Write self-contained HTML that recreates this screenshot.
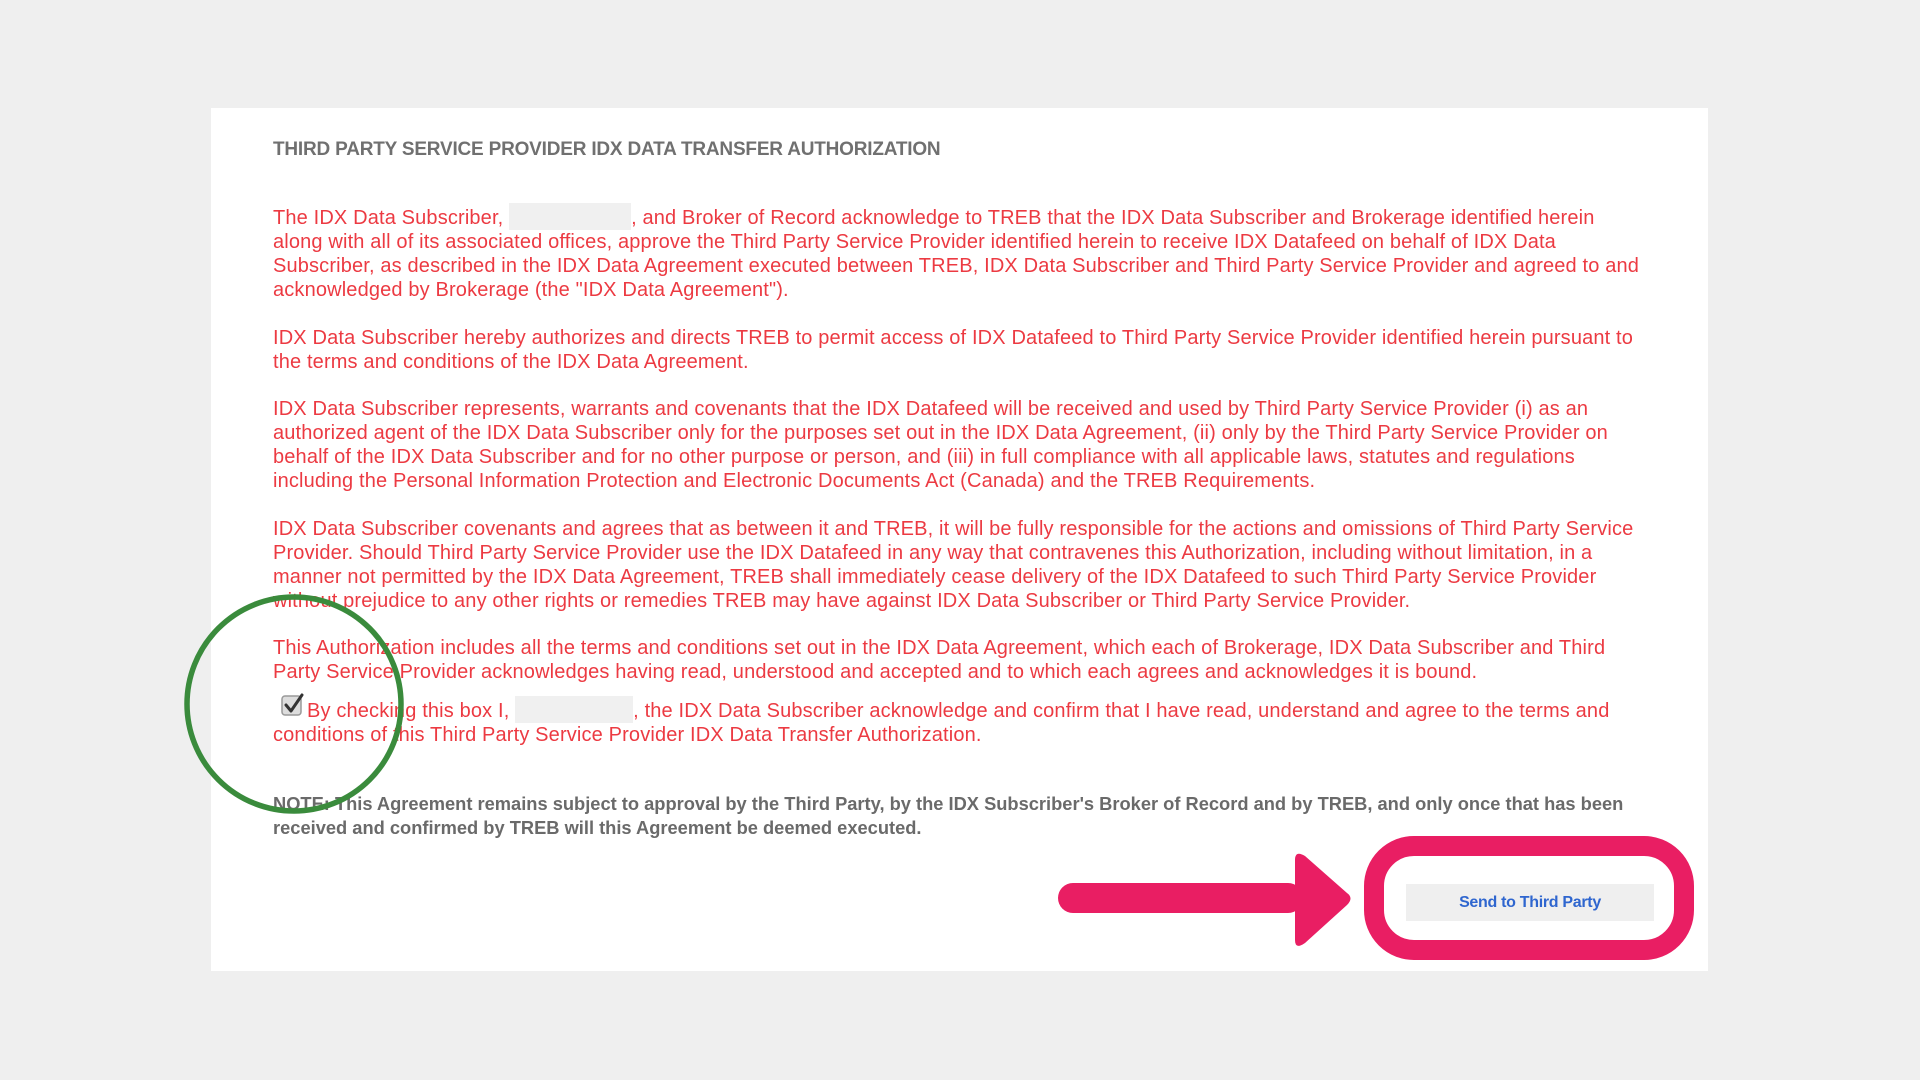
<!DOCTYPE html>
<html><head><meta charset="utf-8"><style>
html,body{margin:0;padding:0}
body{width:1920px;height:1080px;background:#efefef;position:relative;overflow:hidden;font-family:"Liberation Sans",Arial,sans-serif}
.card{position:absolute;left:211px;top:108px;width:1497px;height:863px;background:#fff}
.t{position:absolute;left:273px;white-space:nowrap}
.title{top:139px;font-size:19px;color:#707070;font-weight:bold;letter-spacing:-0.2px}
.r{font-size:20px;line-height:24px;color:#ec3a42;letter-spacing:0.15px}
.n{font-size:18.3px;line-height:24px;color:#6a6a6a;font-weight:bold;letter-spacing:0px}
.b{display:inline-block;background:#f0f0f0;height:27px;vertical-align:-6px}
</style></head><body>
<div class="card"></div>
<div class="t title">THIRD PARTY SERVICE PROVIDER IDX DATA TRANSFER AUTHORIZATION</div>
<div class="t r" style="top:203px">The IDX Data Subscriber, <span class="b" style="width:122px"></span>, and Broker of Record acknowledge to TREB that the IDX Data Subscriber and Brokerage identified herein<br>along with all of its associated offices, approve the Third Party Service Provider identified herein to receive IDX Datafeed on behalf of IDX Data<br>Subscriber, as described in the IDX Data Agreement executed between TREB, IDX Data Subscriber and Third Party Service Provider and agreed to and<br>acknowledged by Brokerage (the "IDX Data Agreement").</div>
<div class="t r" style="top:326px">IDX Data Subscriber hereby authorizes and directs TREB to permit access of IDX Datafeed to Third Party Service Provider identified herein pursuant to<br>the terms and conditions of the IDX Data Agreement.</div>
<div class="t r" style="top:397px">IDX Data Subscriber represents, warrants and covenants that the IDX Datafeed will be received and used by Third Party Service Provider (i) as an<br>authorized agent of the IDX Data Subscriber only for the purposes set out in the IDX Data Agreement, (ii) only by the Third Party Service Provider on<br>behalf of the IDX Data Subscriber and for no other purpose or person, and (iii) in full compliance with all applicable laws, statutes and regulations<br>including the Personal Information Protection and Electronic Documents Act (Canada) and the TREB Requirements.</div>
<div class="t r" style="top:517px">IDX Data Subscriber covenants and agrees that as between it and TREB, it will be fully responsible for the actions and omissions of Third Party Service<br>Provider. Should Third Party Service Provider use the IDX Datafeed in any way that contravenes this Authorization, including without limitation, in a<br>manner not permitted by the IDX Data Agreement, TREB shall immediately cease delivery of the IDX Datafeed to such Third Party Service Provider<br>without prejudice to any other rights or remedies TREB may have against IDX Data Subscriber or Third Party Service Provider.</div>
<div class="t r" style="top:636px">This Authorization includes all the terms and conditions set out in the IDX Data Agreement, which each of Brokerage, IDX Data Subscriber and Third<br>Party Service Provider acknowledges having read, understood and accepted and to which each agrees and acknowledges it is bound.</div>
<div class="t r" style="top:696px"><span style="display:inline-block;width:34px"></span>By checking this box I, <span class="b" style="width:118px"></span>, the IDX Data Subscriber acknowledge and confirm that I have read, understand and agree to the terms and<br>conditions of this Third Party Service Provider IDX Data Transfer Authorization.</div>
<svg style="position:absolute;left:280px;top:692px" width="26" height="26" viewBox="0 0 26 26"><rect x="2" y="4" width="19" height="19" rx="3" fill="#ddd" stroke="#999" stroke-width="1.5"/><path d="M6 13 L11 19 L22 3" fill="none" stroke="#333" stroke-width="3" stroke-linecap="round" stroke-linejoin="round"/></svg>
<div class="t n" style="top:792px">NOTE: This Agreement remains subject to approval by the Third Party, by the IDX Subscriber's Broker of Record and by TREB, and only once that has been<br>received and confirmed by TREB will this Agreement be deemed executed.</div>
<svg style="position:absolute;left:0;top:0" width="1920" height="1080">
<circle cx="294" cy="704" r="107" fill="none" stroke="#3a8b3c" stroke-width="5.5"/>
<rect x="1058" y="883" width="245" height="30" rx="15" fill="#e91e63"/>
<path d="M1295 860 Q1295 850 1305 856 L1347 893 Q1354 898 1347 905 L1305 943 Q1295 950 1295 940 Z" fill="#e91e63"/>
<rect x="1374" y="846" width="310" height="104" rx="40" fill="none" stroke="#e91e63" stroke-width="20"/>
</svg>
<div style="position:absolute;left:1406px;top:884px;width:248px;height:37px;background:#efefef;color:#2f66cf;font-size:16px;line-height:37px;text-align:center;font-weight:bold;letter-spacing:-0.3px">Send to Third Party</div>
</body></html>
